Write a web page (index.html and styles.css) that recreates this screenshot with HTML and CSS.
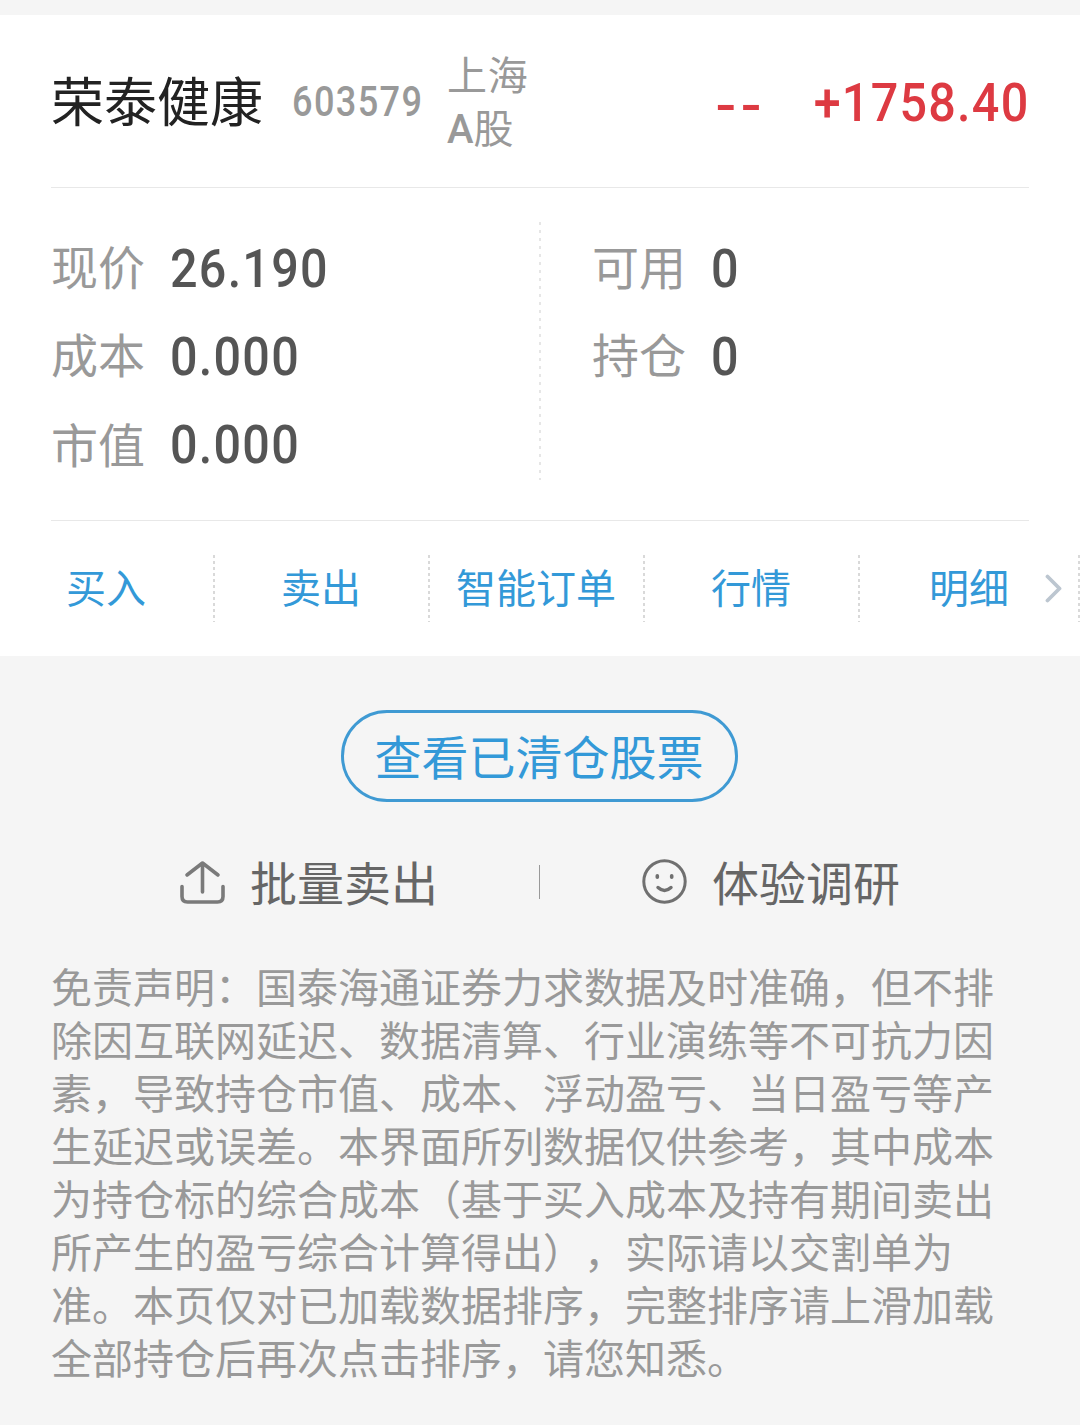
FILE: index.html
```html
<!DOCTYPE html>
<html lang="zh-CN">
  <head>
    <meta charset="utf-8" />
    <title>持仓</title>
    <meta name="viewport" content="width=device-width, initial-scale=1" />
    <link rel="stylesheet" href="styles.css">
  </head>
  <body>
    <div class="card">
      <div class="card-header">
        <div class="stock-name">荣泰健康</div>
        <div class="stock-code"><span class="num">603579</span></div>
        <div class="stock-market">
          <div>上海</div>
          <div><span class="latin">A</span>股</div>
        </div>
        <div class="profit">
          <span class="num profit-rate">--</span>
          <span class="num profit-value">+1758.40</span>
        </div>
      </div>

      <div class="details">
        <div class="details-col">
          <div class="row"><span class="label">现价</span><span class="num">26.190</span></div>
          <div class="row"><span class="label">成本</span><span class="num">0.000</span></div>
          <div class="row"><span class="label label-low">市值</span><span class="num">0.000</span></div>
        </div>
        <div class="details-line"></div>
        <div class="details-col details-right">
          <div class="row"><span class="label">可用</span><span class="num">0</span></div>
          <div class="row"><span class="label">持仓</span><span class="num">0</span></div>
        </div>
      </div>

      <div class="actions">
        <a class="action">买入</a>
        <a class="action">卖出</a>
        <a class="action">智能订单</a>
        <a class="action">行情</a>
        <a class="action action-last">明细</a>
        <svg class="arrow" width="20" height="30" viewBox="0 0 20 30">
          <path d="M3.500 2.500 L15.500 14.500 L3.500 26.500" fill="none" stroke="#bcc6d0" stroke-width="3.8" stroke-linecap="round" stroke-linejoin="round" />
        </svg>
      </div>
    </div>

    <div class="cleared">
      <button class="cleared-button">查看已清仓股票</button>
    </div>

    <div class="links">
      <div class="link">
        <svg class="icon" width="48" height="48" viewBox="0 0 48 48" fill="none" stroke="#7a7a7a" stroke-width="3.6" stroke-linecap="round" stroke-linejoin="round">
          <path d="M24.500 34 V5 M9 17 L24.500 5 L40 17" />
          <path d="M4 28.500 V38.500 Q4 44 9.500 44 H39.500 Q45 44 45 38.500 V28.500" />
        </svg>
        <span>批量卖出</span>
      </div>
      <div class="links-line"></div>
      <div class="link">
        <svg class="icon" width="48" height="48" viewBox="0 0 48 48" fill="none" stroke="#707070" stroke-width="3" stroke-linecap="round">
          <circle cx="24.500" cy="23.500" r="20.700" />
          <path d="M17.300 17.800 V19.200 M31.700 17.800 V19.200" stroke-width="3.6" />
          <path d="M18 29.500 Q24.500 35.500 31 29.500" stroke-width="3.4" />
        </svg>
        <span>体验调研</span>
      </div>
    </div>

    <p class="disclaimer">免责声明：国泰海通证券力求数据及时准确，但不排除因互联网延迟、数据清算、行业演练等不可抗力因素，导致持仓市值、成本、浮动盈亏、当日盈亏等产生延迟或误差。本界面所列数据仅供参考，其中成本为持仓标的综合成本（基于买入成本及持有期间卖出所产生的盈亏综合计算得出），实际请以交割单为准。本页仅对已加载数据排序，完整排序请上滑加载全部持仓后再次点击排序，请您知悉。</p>
  </body>
</html>
```
FILE: styles.css
```css
* {
  box-sizing: border-box;
}

body {
  margin: 0;
  padding-top: 15px;
  background: #f5f5f5;
  font-family: "Noto Sans CJK SC", sans-serif;
  color: #666;
  overflow: hidden;
}

.card {
  height: 641px;
  background: #fff;
}

/* narrow figures */
.num {
  display: inline-block;
  font-family: Roboto, sans-serif;
  font-weight: 500;
  font-size: 54.5px;
  line-height: 1;
  letter-spacing: 1.4px;
  white-space: nowrap;
  transform: scaleX(0.89);
  transform-origin: left center;
}

.card-header {
  display: flex;
  align-items: center;
  height: 173px;
  margin: 0 51px;
  border-bottom: 1px solid #e8e8e8;
}

.stock-name {
  width: 241px;
  padding-bottom: 5px;
  font-size: 53px;
  line-height: 60px;
  color: #222;
}

.stock-code {
  width: 155px;
  height: 41px;
  line-height: 43px;
  color: #999;
}

.stock-code .num {
  font-size: 42px;
  letter-spacing: 1.6px;
  transform: scaleX(0.86);
}

.stock-market {
  padding-bottom: 3px;
  font-size: 40px;
  line-height: 53px;
  letter-spacing: 0.8px;
  color: #999;
}

.stock-market .latin {
  font-family: Roboto, sans-serif;
  font-weight: 500;
  letter-spacing: 0;
  line-height: 1;
}

.profit {
  display: flex;
  margin-left: auto;
  padding-top: 5px;
  color: #dd3a42;
}

.profit .num {
  transform-origin: right center;
}

.profit .profit-rate {
  margin-right: 21px;
  padding-top: 3px;
  letter-spacing: 4px;
  transform: scaleX(1.12);
}

.details {
  display: flex;
  height: 333px;
  margin: 0 51px;
  padding-top: 36px;
  border-bottom: 1px solid #e8e8e8;
}

.details-col {
  width: 488px;
}

.details-right {
  padding-left: 51px;
}

.details-line {
  width: 2px;
  height: 258px;
  margin-top: -2px;
  background: repeating-linear-gradient(#e6e6e6 0 3px, transparent 3px 8px);
}

.row {
  display: flex;
  align-items: center;
  height: 88px;
  color: #555;
}

.label {
  width: 119px;
  padding-bottom: 7px;
  font-size: 47px;
  line-height: 60px;
  color: #999;
}

.label-low {
  padding-bottom: 2px;
}

.actions {
  position: relative;
  display: flex;
  padding-top: 34px;
}

.action {
  width: 215px;
  height: 67px;
  padding-right: 3px;
  font-size: 40px;
  line-height: 63px;
  text-align: center;
  color: #3399d8;
  background: repeating-linear-gradient(#d9d9d9 0 3px, transparent 3px 6px) right top / 2px 100% no-repeat;
}

.action-last {
  width: 220px;
  padding-right: 2px;
}

.arrow {
  position: absolute;
  left: 1044px;
  top: 53px;
}

.cleared {
  display: flex;
  justify-content: center;
  padding: 54px 2px 0 0;
}

.cleared-button {
  width: 397px;
  height: 92px;
  padding: 0 0 3px;
  border: 3px solid #3f9ad3;
  border-radius: 46px;
  background: none;
  font-family: inherit;
  font-size: 47px;
  line-height: 80px;
  color: #3399d8;
}

.links {
  display: flex;
  align-items: center;
  height: 70px;
  margin-top: 45px;
  padding-left: 178px;
}

.link {
  display: flex;
  align-items: center;
  width: 361px;
  font-size: 47px;
  line-height: 60px;
}

.link span {
  padding-bottom: 3px;
}

.icon {
  margin-right: 24px;
}

.links-line {
  width: 1px;
  height: 34px;
  margin-right: 100px;
  background: #999;
}

.disclaimer {
  margin: 42px 51px 0;
  font-size: 41px;
  line-height: 53px;
  color: #999;
  text-spacing-trim: space-all;
}
```
